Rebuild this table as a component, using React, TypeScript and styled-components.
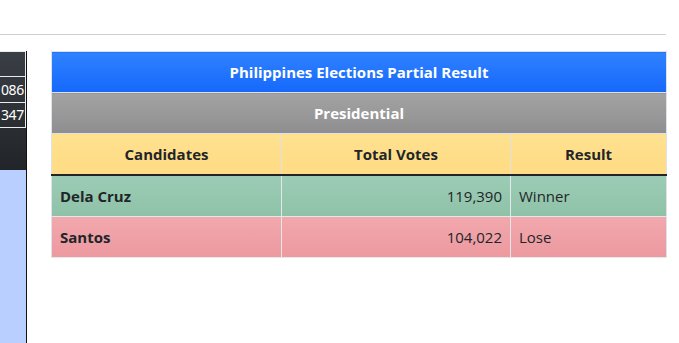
import React from "react";
import styled, { createGlobalStyle } from "styled-components";

const Global = createGlobalStyle`
  html, body { margin: 0; padding: 0; background: #fff; }
  body {
    font-family: "Open Sans", "Noto Sans", "Liberation Sans", sans-serif;
    font-size: 15px;
    line-height: 1.5;
    color: #212529;
    overflow: hidden;
  }
`;

const Page = styled.div`
  width: 679px;
  height: 343px;
  display: flex;
  flex-direction: column;
`;

const Rule = styled.hr`
  margin: 34px 13px 16px 0;
  border: 0;
  border-top: 1px solid #cfcfcf;
  height: 0;
`;

const Body = styled.div`
  flex: 1;
  display: flex;
  gap: 24px;
  align-items: flex-start;
`;

const SidePanel = styled.div`
  width: 26px;
  height: 292px;
  border-right: 1px solid #111;
  background: #b9cfff;
  overflow: hidden;
  display: flex;
  flex-direction: column;
`;

const SideTable = styled.div`
  width: 100%;
  height: 119px;
  background: linear-gradient(#3a3f45, #212428);
  display: flex;
  flex-direction: column;
  padding-top: 1px;
  box-sizing: border-box;
`;

const SideCell = styled.div<{ $h: number }>`
  height: ${(p) => p.$h}px;
  box-sizing: border-box;
  border-top: 1px solid #e9ecef;
  border-right: 1px solid #e9ecef;
  border-bottom: 1px solid #e9ecef;
  margin-top: -1px;
  width: 26px;
  color: #fff;
  font-family: "Noto Sans", "Open Sans", sans-serif;
  font-size: 14px;
  line-height: ${(p) => p.$h - 2}px;
  text-align: right;
  padding-right: 1px;
  white-space: nowrap;
  letter-spacing: -0.3px;
`;

const Table = styled.table`
  width: 616px;
  border-collapse: collapse;
  border: 1px solid #dee2e6;
`;

const BannerCell = styled.th<{ $tone: "blue" | "gray" }>`
  height: 40px;
  padding: 0 8px;
  color: #fff;
  font-weight: 700;
  font-size: 15px;
  text-align: center;
  border-bottom: 1px solid #dee2e6;
  background: ${(p) =>
    p.$tone === "blue"
      ? "linear-gradient(#2f82ff, #1668fb)"
      : "linear-gradient(#a3a3a4, #8e8e90)"};
`;

const HeadCell = styled.th`
  height: 40px;
  padding: 0 8px;
  font-weight: 700;
  font-size: 15px;
  text-align: center;
  background: linear-gradient(#ffe190, #ffdb83);
  border-left: 1px solid #dee2e6;
  border-bottom: 2px solid #212529;
  &:first-child { border-left: 0; }
`;

const Row = styled.tr<{ $tone: "win" | "lose" }>`
  background: ${(p) =>
    p.$tone === "win"
      ? "linear-gradient(#9dccb6, #8ec2a7)"
      : "linear-gradient(#f1a8ad, #ec999f)"};
`;

const Cell = styled.td<{ $align?: "left" | "right"; $bold?: boolean }>`
  height: 40px;
  padding: 0 8px;
  font-size: 15px;
  text-align: ${(p) => p.$align ?? "left"};
  font-weight: ${(p) => (p.$bold ? 700 : 400)};
  border-left: 1px solid #e4e8ea;
  border-bottom: 1px solid #e4e8ea;
  &:first-child { border-left: 0; }
`;

const results = [
  { name: "Dela Cruz", votes: "119,390", result: "Winner", tone: "win" as const },
  { name: "Santos", votes: "104,022", result: "Lose", tone: "lose" as const },
];

export default function App() {
  return (
    <Page>
      <Global />
      <Rule />
      <Body>
        <SidePanel>
          <SideTable>
            <SideCell $h={26}></SideCell>
            <SideCell $h={27}>086</SideCell>
            <SideCell $h={26}>347</SideCell>
          </SideTable>
        </SidePanel>
        <Table>
          <colgroup>
            <col style={{ width: 230 }} />
            <col style={{ width: 229 }} />
            <col />
          </colgroup>
          <thead>
            <tr>
              <BannerCell colSpan={3} $tone="blue">
                Philippines Elections Partial Result
              </BannerCell>
            </tr>
            <tr>
              <BannerCell colSpan={3} $tone="gray">
                Presidential
              </BannerCell>
            </tr>
            <tr>
              <HeadCell>Candidates</HeadCell>
              <HeadCell>Total Votes</HeadCell>
              <HeadCell>Result</HeadCell>
            </tr>
          </thead>
          <tbody>
            {results.map((r) => (
              <Row key={r.name} $tone={r.tone}>
                <Cell $bold>{r.name}</Cell>
                <Cell $align="right">{r.votes}</Cell>
                <Cell>{r.result}</Cell>
              </Row>
            ))}
          </tbody>
        </Table>
      </Body>
    </Page>
  );
}
